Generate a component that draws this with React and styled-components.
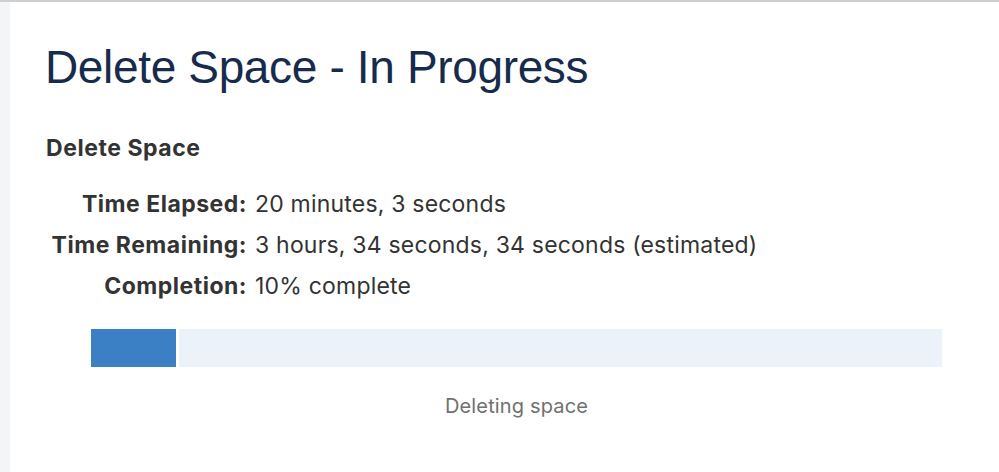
import React from "react";
import styled, { createGlobalStyle } from "styled-components";

const GlobalStyle = createGlobalStyle`
  html, body {
    margin: 0;
    padding: 0;
    background: #ffffff;
  }
  body {
    font-family: Inter, "Liberation Sans", Arial, sans-serif;
  }
`;

const Page = styled.div`
  display: flex;
  width: 999px;
  height: 472px;
  border-top: 2px solid #cfcfcf;
  box-sizing: border-box;
  overflow: hidden;
`;

const Sidebar = styled.div`
  width: 10px;
  flex: none;
  background: #f4f5f7;
`;

const Content = styled.main`
  flex: 1;
  padding: 39px 0 0 36px;
`;

const Title = styled.h1`
  margin: 0 0 0 -1px;
  font-family: "Liberation Sans", Arial, sans-serif;
  font-size: 46px;
  font-weight: 400;
  line-height: 52px;
  color: #172b4d;
  letter-spacing: -0.35px;
`;

const SubTitle = styled.h2`
  margin: 41px 0 0;
  font-size: 23px;
  font-weight: 700;
  line-height: 28px;
  letter-spacing: 0.55px;
  color: #333333;
`;

const Stats = styled.dl`
  display: grid;
  grid-template-columns: 201px auto;
  column-gap: 8px;
  row-gap: 13px;
  margin: 28px 0 0;
  font-size: 23px;
  line-height: 28px;
  color: #333333;
`;

const Label = styled.dt`
  font-weight: 700;
  text-align: right;
  white-space: nowrap;
  letter-spacing: 0.5px;
`;

const Value = styled.dd`
  margin: 0;
  white-space: nowrap;
  letter-spacing: 0.2px;
`;

const ProgressWrap = styled.div`
  width: 851px;
  margin: 29px 0 0 45px;
`;

const Track = styled.div`
  display: flex;
  height: 38px;
  background: #ebf2f9;
`;

const Fill = styled.div`
  height: 100%;
  background: #3b7fc4;
  border-right: 3px solid #ffffff;
`;

const Caption = styled.div`
  margin-top: 27px;
  text-align: center;
  font-size: 20px;
  line-height: 24px;
  letter-spacing: 0.15px;
  color: #707070;
`;

const stats = [
  ["Time Elapsed:", "20 minutes, 3 seconds"],
  ["Time Remaining:", "3 hours, 34 seconds, 34 seconds (estimated)"],
  ["Completion:", "10% complete"],
];

const App = () => {
  const percent = 10;
  return (
    <>
      <GlobalStyle />
      <Page>
        <Sidebar />
        <Content>
          <Title>Delete Space - In Progress</Title>
          <SubTitle>Delete Space</SubTitle>
          <Stats>
            {stats.map(([label, value]) => (
              <React.Fragment key={label}>
                <Label>{label}</Label>
                <Value>{value}</Value>
              </React.Fragment>
            ))}
          </Stats>
          <ProgressWrap>
            <Track>
              <Fill style={{ width: `${percent}%` }} />
            </Track>
            <Caption>Deleting space</Caption>
          </ProgressWrap>
        </Content>
      </Page>
    </>
  );
};

export default App;
